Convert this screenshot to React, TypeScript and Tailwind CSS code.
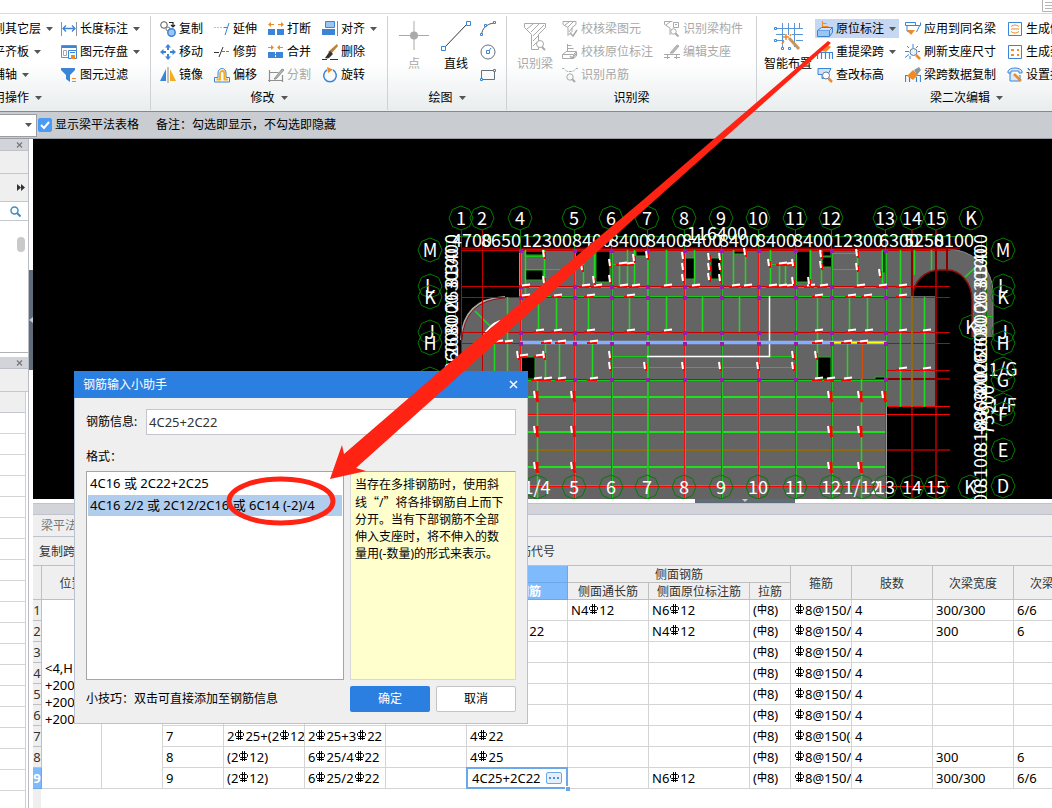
import React from 'react';

const FONT = "font-['Noto_Sans','Noto_Sans_CJK_SC',sans-serif]";

/* ---------- small pieces ---------- */

const Caret = ({ className = '' }: { className?: string }) => (
  <svg width="7" height="4" viewBox="0 0 7 4" className={`shrink-0 ${className}`}>
    <path d="M0 0h7L3.5 4z" fill="#555" />
  </svg>
);

const B = '#3b84d6';
const L = '#9cc6f2';
const O = '#f08a24';
const G = '#a9a9a9';

const ICONS: Record<string, React.ReactNode> = {
  length: (
    <g fill="none" stroke={B}>
      <path d="M.5 1v14M15.5 1v14" stroke="#8a929c" />
      <path d="M2 7.500h12M5 4.500L2 7.500l3 3M11 4.500l3 3-3 3" strokeWidth="1.300" />
    </g>
  ),
  store: (
    <g fill="none">
      <path d="M.5 1.500h15v12H.5z" stroke="#6d8fb3" fill="#fff" />
      <path d="M1 3h14" stroke={B} strokeWidth="2" />
      <path d="M2.500 6.500h3v5h-3z" stroke={G} />
      <path d="M7.500 6.500h8v8h-8z" stroke={B} fill="#fff" />
      <path d="M9 8.500h5" stroke={B} />
      <path d="M10 11h4v4h-4z" fill={O} />
    </g>
  ),
  filter: (
    <g>
      <path d="M0 1h14v2L9 8v7l-4-3V8L0 3z" fill={B} />
      <path d="M11 11.500h4M11 14.500h4" stroke={O} />
    </g>
  ),
  copy: (
    <g fill="none">
      <circle cx="4" cy="4" r="3.300" stroke="#555" />
      <circle cx="8" cy="8" r="2" stroke="#777" />
      <circle cx="11.500" cy="11.500" r="3.700" stroke={B} fill={L} strokeWidth="1.500" />
      <path d="M9 1.500h4v4M11 4l2 2 2-2" stroke="#222" strokeWidth="1.200" />
    </g>
  ),
  move: (
    <g fill={B}>
      <path d="M8 0l3 3.500H5zM8 16l3-3.500H5zM0 8l3.500-3v6zM16 8l-3.500-3v6z" />
      <path d="M8 3v3M8 10v3M3 8h3M10 8h3" stroke={B} strokeWidth="2" />
    </g>
  ),
  mirror: (
    <g>
      <path d="M6 2v12H0z" fill={B} />
      <path d="M10 2v12h6z" fill="#f5ac1d" />
      <path d="M8 0v16" stroke="#888" />
    </g>
  ),
  extend: (
    <g fill="none">
      <path d="M0 6.500h11" stroke={L} strokeDasharray="2 1" />
      <path d="M15 2l-4 12" stroke={B} />
      <path d="M10 6.500h3" stroke={B} />
    </g>
  ),
  trim: (
    <g fill="none">
      <path d="M0 8.500h5" stroke="#333" />
      <path d="M9 3L5 13" stroke="#333" />
      <path d="M8 7.500h8" stroke={B} strokeDasharray="3 1" />
    </g>
  ),
  offset: (
    <g fill="none">
      <path d="M.5 15V10.500h3.500V6a4 4.500 0 0 1 8 0v4.500h3.500V15z" stroke={B} />
      <path d="M2.500 12.500H6V6.500a2.200 2.500 0 0 1 4.400 0v6h3.500" stroke="#f5ac1d" strokeWidth="1.800" />
    </g>
  ),
  breakIt: (
    <g>
      <path d="M0 8h7v6H0zM9 8h7v6H9z" fill={B} />
      <path d="M0 3.500L3 1v5zM16 3.500L13 1v5z" fill={O} />
      <path d="M2 3.500h4M10 3.500h4" stroke={O} />
    </g>
  ),
  merge: (
    <g>
      <path d="M0 8h15v6H0z" fill={B} />
      <path d="M7.500 8v6" stroke="#fff" strokeDasharray="2 1" />
      <path d="M6 3.500L3 1v5zM9 3.500L12 1v5z" fill={O} />
      <path d="M0 3.500h4M11 3.500h4" stroke={O} />
    </g>
  ),
  split: (
    <g fill="none" stroke="#909090">
      <path d="M1.500 5.500h9M1.500 3v12M0 13.500h15M14.500 8v7" strokeWidth="1.200" />
      <path d="M6 12l8-10 2 1-8 9z" fill="#b4b4b4" />
    </g>
  ),
  align: (
    <g>
      <path d="M3.500.5h9v6h-9z" fill={L} stroke={B} />
      <path d="M0 8h13v6H0z" fill={B} />
      <path d="M15.500 0v15" stroke="#888" />
    </g>
  ),
  erase: (
    <g>
      <path d="M15 0l1 2-7 8-3-2z" fill="#b9803d" />
      <path d="M8 7l3 3-4 4c-2 1-4 0-4 0z" fill="#333" />
      <path d="M0 15.500h5M8 15.500h8" stroke="#333" />
    </g>
  ),
  rotate: (
    <g fill="none">
      <path d="M11 3a6.300 6.300 0 1 1-6 0" stroke={B} strokeWidth="1.500" />
      <path d="M5 0l6 2.500L6 6z" fill={O} />
    </g>
  ),
  arc: (
    <g fill="none">
      <path d="M1.500 14C2 8 6 3 14 2" stroke="#555" />
      <path d="M.5 12.500h2v2h-2zM4.500 3.500h2v2h-2zM13.500.5h2v2h-2z" fill="#fff" stroke={B} />
    </g>
  ),
  circle: (
    <g fill="none">
      <circle cx="8" cy="8" r="7" stroke="#66707a" />
      <path d="M8 8l3-4" stroke={B} />
      <path d="M6.500 6.500h3v3h-3z" fill="#fff" stroke={B} />
    </g>
  ),
  rect: (
    <g fill="none">
      <path d="M1.500 3.500h13v9h-13z" stroke="#66707a" />
      <path d="M13.500 2.500h2v2h-2zM.5 11.500h2v2h-2z" fill="#fff" stroke={B} />
    </g>
  ),
  checkBeam: (
    <g fill="none" stroke={G}>
      <path d="M1 .5h13v3l-4 3v4l-4 4v-8l-5-3z" />
      <path d="M3 4l4-3M6 6l5-5M7 11l3-4" />
      <path d="M8 12l3 3 4-6" strokeWidth="1.500" />
    </g>
  ),
  checkNote: (
    <g fill="none" stroke={G}>
      <path d="M5.500 0v7M5.500 1.500h4M5.500 4.500h6" />
      <path d="M.5 10.500l4-3h10l-3 3zM.5 10.500v4h11v-4M14.500 8v4l-3 2.500" />
      <path d="M8 12l2 2 5-5" strokeWidth="1.500" />
    </g>
  ),
  hanger: (
    <g fill="none" stroke={G}>
      <path d="M0 1.500h2l3 3h6l3-3h2" strokeDasharray="3 1" />
      <circle cx="8" cy="10" r="3.200" />
      <path d="M10 12l3 3" strokeWidth="2" />
    </g>
  ),
  beamPart: (
    <g fill="none" stroke={G}>
      <path d="M6 14V7L.5 3.500v-3h8M2 4l4-3" />
      <path d="M9.500 1.500h5v5h-5zM11 3.500h2" />
      <circle cx="9.500" cy="10.500" r="2.700" />
      <path d="M11.500 12.500l3 3" strokeWidth="2" />
    </g>
  ),
  support: (
    <g fill="none" stroke={G}>
      <path d="M0 10.500h16M3.500 11v4M12.500 11v4M0 13.500h6M10 13.500h6" />
      <path d="M6 9l7-8 2 1-6 7z" fill="#bbb" />
    </g>
  ),
  note: (
    <g fill="none">
      <path d="M5.500 0v8M5.500 2.500h4M5.500 5.500h6" stroke={O} />
      <path d="M.5 9.500l4-3h11l-3 3z" fill="#cfe2f7" stroke={B} />
      <path d="M.5 9.500v6h12v-6M15.500 6.500v5l-3 4" fill={L} stroke={B} />
    </g>
  ),
  span: (
    <g fill="none">
      <path d="M.5 15V8.500h15V15M4.500 9v6M8.500 9v6M12.500 9v6" stroke={B} strokeWidth="1.200" />
      <path d="M5 7l6-6 3 2-5 5z" fill={O} />
    </g>
  ),
  level: (
    <g fill="none">
      <path d="M1 1.500h13l-3 6v4H5v-4H1z" fill="#cfe2f7" stroke={B} />
      <circle cx="9" cy="8.500" r="3.500" fill="#fff" stroke="#607d9e" />
      <path d="M11.500 11.500l3.500 3.500" stroke={O} strokeWidth="2.500" />
    </g>
  ),
  apply: (
    <g fill="none">
      <path d="M.5 1.500h10v3H.5zM5.500 4.500h10v-3M2 5v5l4 2M14.500 5l-3 6" stroke={B} />
      <path d="M2 9h8l-4 5z" fill={O} />
    </g>
  ),
  refresh: (
    <g fill="none">
      <path d="M0 7.500h4M8 0v4M2 2l2 2M13 2l-2 2M0 13.500l4-3M5 15v-3M15 7.500h-2" stroke={B} />
      <circle cx="8.500" cy="8" r="3.500" fill="#e8f1fb" stroke="#607d9e" />
      <path d="M11 11l4 4" stroke={O} strokeWidth="2.500" />
    </g>
  ),
  brush: (
    <g fill="none">
      <path d="M.5 15V8.500h15V15M4.500 10v5M11.500 10v5" stroke={B} strokeWidth="1.200" />
      <path d="M2 9l6-6 5 5-5 5z" fill={O} />
      <path d="M9 3l5-3 2 3-4 5z" fill="#8b95a1" />
    </g>
  ),
  gen1: (
    <g fill="none">
      <path d="M1.500 1.500h13v13h-13z" stroke={B} />
      <path d="M4 5.500c3-2 5-2 8 0M4 8h8M4 10.500c3 2 5 2 8 0" stroke={O} />
    </g>
  ),
  gen2: (
    <g fill="none">
      <path d="M1.500 1.500h13v13h-13z" stroke={B} />
      <path d="M4 5h3v2H4zM10 5h2v2h-2zM4 10h3v2H4zM10 10h2v2h-2z" fill={O} />
    </g>
  ),
  gen3: (
    <g fill="none">
      <path d="M1 4c2-4 12-4 14 0v2h-3V4H4v2H1zM3 6v8h10V8" stroke={B} fill="#dbe9f8" />
      <path d="M7 7l7 7" stroke={O} strokeWidth="2.500" />
    </g>
  ),
};

const Icon = ({ name }: { name: string }) => (
  <svg width="16" height="16" viewBox="0 0 16 16" className="shrink-0">
    {ICONS[name]}
  </svg>
);

interface ToolProps {
  icon?: string;
  label: string;
  caret?: boolean;
  off?: boolean;
  active?: boolean;
}

const Tool = ({ icon, label, caret, off, active }: ToolProps) => (
  <button
    type="button"
    disabled={off}
    className={`flex h-[19px] items-center gap-[3px] pl-[2px] whitespace-nowrap ${off ? 'text-[#a8a8a8]' : 'text-black'} ${active ? 'bg-[#c5d7f2]' : ''}`}
  >
    {icon && <Icon name={icon} />}
    <span>{label}</span>
    {caret && <Caret className="mr-[3px] ml-[2px]" />}
  </button>
);

const Column = ({ items, className = '' }: { items: ToolProps[]; className?: string }) => (
  <div className={`flex shrink-0 flex-col items-start gap-1 ${className}`}>
    {items.map((t) => (
      <Tool key={t.label} {...t} />
    ))}
  </div>
);

const BigTool = ({ label, off, children }: { label: string; off?: boolean; children: React.ReactNode }) => (
  <button
    type="button"
    disabled={off}
    className={`flex shrink-0 flex-col items-center whitespace-nowrap ${off ? 'text-[#a8a8a8]' : 'text-black'}`}
  >
    <svg width="32" height="34" viewBox="0 0 32 34">{children}</svg>
    <span className="leading-[22px]">{label}</span>
  </button>
);

interface GroupProps {
  title: string;
  caret?: boolean;
  width: string;
  children: React.ReactNode;
}

const Group = ({ title, caret, width, children }: GroupProps) => (
  <section className={`flex h-[94px] shrink-0 flex-col border-r border-[#cfd2d4] ${width}`}>
    <div className="flex h-[70px] pt-[3px]">{children}</div>
    <div className="flex h-6 items-center justify-center gap-[6px]">
      <span>{title}</span>
      {caret && <Caret />}
    </div>
  </section>
);

/* ---------- ribbon ---------- */

const Ribbon = () => (
  <header className="shrink-0 bg-white">
    <div className="flex h-[14px] justify-end border-b border-[#d9d9d9]">
      <svg width="10" height="12" viewBox="0 0 10 12">
        <path d="M.5 0v11.500H10M3 2.500h7M3 5.500h7M3 8.500h7" stroke="#b5b5b5" fill="none" />
      </svg>
    </div>
    <div className="flex h-[98px] overflow-hidden border-b border-[#85888c] bg-linear-to-b from-white from-50% to-[#e9edee] pt-[2px]">
      <section className="flex h-[94px] w-[151px] shrink-0 flex-col border-r border-[#cfd2d4]">
        <div className="flex h-[70px] pt-[3px]">
          <Column
            className="-ml-[33px] w-[92px]"
            items={[
              { label: '复制到其它层', caret: true },
              { label: '自动平齐板', caret: true },
              { label: '两点辅轴', caret: true },
            ]}
          />
          <Column
            items={[
              { icon: 'length', label: '长度标注', caret: true },
              { icon: 'store', label: '图元存盘', caret: true },
              { icon: 'filter', label: '图元过滤' },
            ]}
          />
        </div>
        <div className="-ml-[19px] flex h-6 items-center gap-[6px]">
          <span>通用操作</span>
          <Caret />
        </div>
      </section>

      <Group title="修改" caret width="w-[237px]">
        <Column
          className="ml-[7px] w-[54px]"
          items={[
            { icon: 'copy', label: '复制' },
            { icon: 'move', label: '移动' },
            { icon: 'mirror', label: '镜像' },
          ]}
        />
        <Column
          className="w-[54px]"
          items={[
            { icon: 'extend', label: '延伸' },
            { icon: 'trim', label: '修剪' },
            { icon: 'offset', label: '偏移' },
          ]}
        />
        <Column
          className="w-[54px]"
          items={[
            { icon: 'breakIt', label: '打断' },
            { icon: 'merge', label: '合并' },
            { icon: 'split', label: '分割', off: true },
          ]}
        />
        <Column
          items={[
            { icon: 'align', label: '对齐', caret: true },
            { icon: 'erase', label: '删除' },
            { icon: 'rotate', label: '旋转' },
          ]}
        />
      </Group>

      <Group title="绘图" caret width="w-[119px]">
        <div className="flex gap-[10px] pl-[10px]">
          <BigTool label="点" off>
            <path d="M16 2v29M1 16.500h30" stroke="#aaa" />
            <circle cx="16" cy="16.500" r="4" fill="#aaa" />
          </BigTool>
          <BigTool label="直线">
            <path d="M4 29L28 4" stroke="#333" />
            <path d="M1.500 27.500h4v4h-4zM26.500 2.500h4v4h-4z" fill="#fff" stroke={B} />
          </BigTool>
          <div className="-ml-[2px] flex flex-col gap-[7px] pt-[2px]">
            {['arc', 'circle', 'rect'].map((n) => (
              <button key={n} type="button" aria-label={n} className="block h-4">
                <Icon name={n} />
              </button>
            ))}
          </div>
        </div>
      </Group>

      <Group title="识别梁" width="w-[250px]">
        <div className="flex w-[53px] justify-center pl-[3px]">
          <BigTool label="识别梁" off>
            <g fill="none" stroke={G}>
              <path d="M5.500 4.500h21v4l-7 7v15h-7v-15l-7-7z" />
              <path d="M8 10l6-5M12 13l8-8M14 17l11-11M14 22l5-5M14 27l4-4" />
              <circle cx="21" cy="25" r="3.500" fill="#fff" />
              <path d="M23 28l3 3" strokeWidth="2" />
            </g>
          </BigTool>
        </div>
        <Column
          className="w-[102px]"
          items={[
            { icon: 'checkBeam', label: '校核梁图元', off: true },
            { icon: 'checkNote', label: '校核原位标注', off: true },
            { icon: 'hanger', label: '识别吊筋', off: true },
          ]}
        />
        <Column
          items={[
            { icon: 'beamPart', label: '识别梁构件', off: true },
            { icon: 'support', label: '编辑支座', off: true },
          ]}
        />
      </Group>

      <Group title="梁二次编辑" caret width="w-[420px]">
        <div className="flex w-[58px] justify-center pl-[4px]">
          <BigTool label="智能布置">
            <g fill="none">
              <path d="M10.500 4v24M16.500 4v12M22.500 4v24M27.500 4v6M4 9.500h27M4 15.500h9M20 15.500h11M4 21.500h8M24 21.500h7" stroke="#5b94d6" />
              <path d="M2.500 8.500h2v2h-2zM2.500 20.500h2v2h-2zM9.500 28.500h2v2h-2zM16.500 28.500h2v2h-2z" fill="#fff" stroke={B} />
              <path d="M17 19l10 11" stroke="#c9955a" strokeWidth="3" />
              <path d="M14 15v6M11 18h6M12 22l-2 3M19 15l-1 2" stroke={O} strokeWidth="1.500" />
            </g>
          </BigTool>
        </div>
        <Column
          className="w-[88px]"
          items={[
            { icon: 'note', label: '原位标注', caret: true, active: true },
            { icon: 'span', label: '重提梁跨', caret: true },
            { icon: 'level', label: '查改标高' },
          ]}
        />
        <Column
          className="w-[102px]"
          items={[
            { icon: 'apply', label: '应用到同名梁' },
            { icon: 'refresh', label: '刷新支座尺寸' },
            { icon: 'brush', label: '梁跨数据复制' },
          ]}
        />
        <Column
          items={[
            { icon: 'gen1', label: '生成侧面筋' },
            { icon: 'gen2', label: '生成架立筋' },
            { icon: 'gen3', label: '设置拱梁' },
          ]}
        />
      </Group>
    </div>
  </header>
);

/* ---------- side panels ---------- */

const PanelHead = () => (
  <div className="flex h-3 shrink-0 items-center justify-end border-b border-[#bfc1c8] bg-[#d3d4da] pr-[5px]">
    <button type="button" aria-label="关闭" className="block">
      <svg width="7" height="6" viewBox="0 0 7 6">
        <path d="M1 .5l5 5M6 .5l-5 5" stroke="#777" strokeWidth="1.200" />
      </svg>
    </button>
  </div>
);

const SidePanels = () => (
  <aside className="flex w-[29px] shrink-0 flex-col border-r border-[#b9bcc4]">
    <PanelHead />
    <div className="h-[23px] shrink-0 border-b border-[#c4c7ce] bg-[#efefef]" />
    <div className="flex h-7 shrink-0 items-center justify-end border-b border-[#c4c7ce] bg-[#efefef] pr-[3px]">
      <svg width="8" height="7" viewBox="0 0 8 7">
        <path d="M0 0l4 3.500L0 7zM4 0l4 3.500L4 7z" fill="#333" />
      </svg>
    </div>
    <div className="flex h-[19px] shrink-0 items-center justify-end border-b border-[#c4c7ce] pr-[7px]">
      <svg width="11" height="11" viewBox="0 0 11 11" fill="none" stroke="#3a8fc7">
        <circle cx="4.500" cy="4.500" r="3.500" strokeWidth="1.500" />
        <path d="M7 7l3.500 3.500" strokeWidth="2" />
      </svg>
    </div>
    <div className="flex h-[132px] shrink-0 justify-end border-b border-[#b0b3b8] pt-4 pr-[3px]">
      <div className="h-[15px] w-2 rounded-full bg-[#c9c9c9]" />
    </div>
    <div className="h-1 shrink-0" />
    <PanelHead />
    <div className="h-[23px] shrink-0 border-b border-[#c4c7ce] bg-[#efefef]" />
    <div className="mr-[2px] border-r border-[#cfcfcf]">
      <div className="h-[21px] border-b border-[#c4c7ce] bg-[#efefef]" />
      {Array.from({ length: 19 }, (_, i) => (
        <div key={i} className="h-[21px] border-b border-[#d4d4d4]" />
      ))}
    </div>
  </aside>
);

/* ---------- drawing ---------- */

const COLS: [number, string][] = [
  [461, '1'], [482, '2'], [520, '4'], [574, '5'], [611, '6'], [647, '7'], [684, '8'], [721, '9'],
  [758, '10'], [795, '11'], [831, '12'], [885, '13'], [912, '14'], [936, '15'], [971, 'K'],
];
const BOTTOM: [number, string][] = [
  [537, '1/4'], [574, '5'], [611, '6'], [647, '7'], [684, '8'], [721, '9'], [758, '10'], [795, '11'],
  [831, '12'], [862, '1/12'], [885, '13'], [912, '14'], [936, '15'], [970, 'K'],
];
const LEFT_ROWS: [number, string][] = [[250, 'M'], [286, 'L'], [297, 'K'], [332, 'J'], [343, 'H'], [379, 'G']];
const RIGHT_ROWS: [number, string][] = [
  [250, 'M'], [286, 'L'], [297, 'K'], [332, 'J'], [343, 'H'], [369, '1/G'], [380, 'G'],
  [405, '1/F'], [414, 'F'], [450, 'E'], [486, 'D'],
];
const TOP_DIMS: [number, string][] = [
  [472, '4700'], [501, '8650'], [547, '12300'], [592, '8400'], [629, '8400'], [666, '8400'], [702, '8400'],
  [739, '8400'], [776, '8400'], [813, '8400'], [858, '12300'], [899, '6300'], [924, '5250'], [954, '8100'],
];
const LEFT_DIMS: [number, string][] = [
  [254, '3400'], [268, '8100'], [291, '2630'], [314, '8000'], [337, '2630'], [357, '12600'],
];
const RIGHT_DIMS: [number, string][] = [
  [254, '3400'], [268, '8100'], [291, '2630'], [314, '8000'], [337, '2630'], [357, '12600'], [374, '2000'],
  [392, '6300'], [410, '8300'], [432, '8100'], [468, '8100'], [504, '8100'],
];
const VOIDS = [
  [525, 251, 18, 4], [525, 270, 18, 10], [575, 251, 14, 9], [596, 251, 14, 31], [636, 251, 11, 5],
  [685, 258, 10, 21], [711, 258, 10, 21], [734, 251, 11, 3], [796, 251, 14, 31], [822, 251, 9, 5],
  [822, 257, 10, 10], [882, 251, 3, 22], [817, 357, 14, 22], [521, 357, 14, 22], [875, 377, 10, 3],
];
const GREEN_V = [
  [525, 250, 297], [544, 250, 286], [583, 262, 286], [594, 250, 286], [619, 264, 286], [627, 250, 286], [634, 250, 286],
  [666, 250, 286], [694, 250, 286], [733, 250, 286], [745, 250, 286], [770, 250, 286], [779, 264, 286], [785, 264, 286],
  [810, 250, 286], [821, 250, 286], [857, 250, 286], [882, 250, 286], [900, 250, 407], [914, 250, 275], [931, 250, 270],
  [507, 297, 379], [538, 297, 332], [556, 297, 332], [588, 297, 332], [629, 297, 332], [666, 297, 332], [702, 297, 332],
  [739, 297, 332], [817, 297, 343], [849, 297, 332], [867, 297, 332], [924, 297, 407], [494, 343, 379], [545, 343, 379],
  [559, 343, 379], [592, 343, 379], [817, 343, 379], [847, 343, 379], [537, 379, 499], [861, 379, 499],
];
const H_TICKS: [number, number[]][] = [
  [286, [525, 585, 597, 623, 635, 667, 695, 735, 747, 772, 782, 790, 810, 823, 860, 882, 902]],
  [296, [525, 557, 590, 630, 818, 851, 867, 902]],
  [331, [539, 557, 590, 630, 667, 818, 851, 868, 902, 926]],
  [342, [498, 508, 547, 561, 593, 818, 847, 863]],
  [369, [902, 926]],
  [379, [537, 547, 561, 593, 818, 830, 847]],
  [356, [523, 539]],
  [264, [622, 630, 782, 790]],
];
const V_TICKS: [number, number[]][] = [
  [544, [254, 280, 355]], [582, [267]], [594, [280]], [610, [263, 279, 355, 366]], [634, [258]], [647, [255]],
  [683, [256, 267, 278, 366]], [709, [257, 267, 277]], [720, [257, 267, 278, 366]], [745, [252]], [769, [263]],
  [793, [263, 281, 355, 366]], [809, [281]], [821, [254, 265]], [857, [253, 267]], [880, [273]], [518, [355]],
  [645, [366]], [758, [366]], [816, [355]],
];
const BIG_TICKS: [number, number][] = [
  [537, 396], [537, 431], [537, 467], [574, 396], [574, 431], [574, 467],
  [831, 396], [831, 431], [831, 467], [861, 396], [861, 431], [861, 467], [885, 396],
];
const GRID_X = [520, 574, 611, 647, 684, 721, 758, 795, 831, 885];
const GRID_Y = [250, 286, 297, 332, 343, 379];

const octagon = (cx: number, cy: number) =>
  Array.from({ length: 8 }, (_, i) => {
    const a = (i * Math.PI) / 4;
    return `${(cx + 12 * Math.cos(a)).toFixed(1)},${(cy + 12 * Math.sin(a)).toFixed(1)}`;
  }).join(' ');

const Mark = ({ x, y, label }: { x: number; y: number; label: string }) => (
  <g>
    <polygon points={octagon(x, y)} fill="none" stroke="#007d00" />
    <text x={x} y={y + 7} fill="#fff" textAnchor="middle">{label}</text>
  </g>
);

const Drawing = () => (
  <svg
    viewBox="33 139 1019 360"
    preserveAspectRatio="xMinYMin slice"
    className="block h-[360px] w-full shrink-0 bg-black font-['Noto_Sans_CJK_SC',sans-serif] text-[18px]"
  >
    <path d="M461 499V340Q463 299 505 297H520V249H947A46 43 0 0 1 993 292V337H972V300A25 30 0 0 0 947 270H940A27 26 0 0 0 913 296H936V407H886V499z" fill="#646464" />
    <g fill="none">
      <path d="M461 340Q463 299 505 297" stroke="#a9a9a9" strokeWidth="2" />
      <path d="M462 340Q464 300 505 298" stroke="#8a1010" />
      <path d="M947 249A46 43 0 0 1 993 292V337" stroke="#8a8a8a" />
      <path d="M913 296A27 26 0 0 1 940 270H947A25 30 0 0 1 972 300V337" stroke="#8a1010" strokeWidth="1.500" />
      <path d="M483 337Q489 325 500 321" stroke="#fff" strokeWidth="2" />
      <path d="M475 311l15 15M965 277l12-11" stroke="#1fd81f" strokeWidth="1.500" />
    </g>
    {VOIDS.map(([x, y, w, h]) => (
      <rect key={`${x}-${y}`} x={x} y={y} width={w} height={h} fill="#000" stroke="#1fae1f" />
    ))}

    {/* grid */}
    <g fill="none">
      <path d="M461.500 230V379M482.500 230V499" stroke="#c00000" />
      <path d="M912 230V296M936 230V499M912 407V499" stroke="#8f0000" strokeWidth="2" />
      <path d="M461 250.500H950M461 286.500H950M461 297.500H950M461 332.500H950M461 343.500H950M886 370.500H950M520 379.500H950" stroke="#c80000" />
      <path d="M886 406.500H950M520 414.500H950M520 486.500H950" stroke="#ff0000" />
      <path d="M461 248.500H960M886 379H950M886 450H950M947 249V270" stroke="#8a0000" strokeWidth="2" />
      <path d="M520 450H886M574 379V499M758 379V499M912 296V407" stroke="#8f6a12" strokeWidth="2" />
      <path d="M520 397H886M520 432H886M520 467H886" stroke="#1fe01f" strokeWidth="2" />
      <path d="M520 287.500H886M520 296.500H886M520 380.500H886M520 415.500H886M520 485.500H886M611 356.500H647M611 367.500H795M770 356.500H795M525 256.500H543M525 269.500H560M611 264.500H634M770 264.500H793M831 253.500H857M831 269.500H857M973 316.500H993" stroke="#18c818" />
      {GREEN_V.map(([x, a, b]) => (
        <path key={`${x}-${a}`} d={`M${x + 0.5} ${a}V${b}`} stroke="#1fd81f" strokeWidth="1.500" />
      ))}
      {GRID_X.map((x) => (
        <g key={x}>
          <path d={`M${x + 1.5} 250V499`} stroke="#22c022" />
          <path d={`M${x + 0.5} 250V499`} stroke={x === 647 ? '#18d018' : '#f01010'} />
          <path d={`M${x + 0.5} 230V250`} stroke="#007d00" />
        </g>
      ))}
      <path d="M862.500 343V379" stroke="#d4500a" />
      <path d="M519.500 250V297M886.500 407V499" stroke="#999" />
      <path d="M647 356.500H769.500V296" stroke="#fff" strokeWidth="1.500" />
      <path d="M520 342.500H886" stroke="#86adff" strokeWidth="3.500" />
      <path d="M831 342.500H886" stroke="#ffff00" strokeWidth="1.500" />
    </g>

    {/* column nodes */}
    <g fill="#9a1ab0">
      {GRID_X.map((x) =>
        GRID_Y.map((y) => <rect key={`${x}-${y}`} x={x - 1} y={y - 1} width="4" height="4" />),
      )}
    </g>

    {/* rebar notes */}
    {H_TICKS.map(([y, xs]) =>
      xs.map((x) => (
        <g key={`${x}-${y}`}>
          <path d={`M${x - 6} ${y + 1}h10`} stroke="#f00" strokeWidth="2" />
          <path d={`M${x - 3} ${y - 0.5}l8-1`} stroke="#fff" strokeWidth="2" />
        </g>
      )),
    )}
    {V_TICKS.map(([x, ys]) =>
      ys.map((y) => (
        <g key={`${x}-${y}`}>
          <path d={`M${x + 1} ${y - 2}v7`} stroke="#f00" strokeWidth="2" />
          <path d={`M${x - 1} ${y - 4}l1 7`} stroke="#fff" strokeWidth="2" />
        </g>
      )),
    )}
    {BIG_TICKS.map(([x, y]) => (
      <g key={`${x}-${y}`}>
        <path d={`M${x} ${y - 5}v8l1 3`} stroke="#f00" strokeWidth="3" fill="none" />
        <path d={`M${x - 3} ${y - 5}l1 7`} stroke="#fff" strokeWidth="2" />
      </g>
    ))}

    {/* axes and dimensions */}
    <path d="M450 236.500H975M446.500 236V372M455.500 236V372M981.500 236V499M986.500 236V499" stroke="#067806" />
    {COLS.map(([x, t]) => <Mark key={x} x={x} y={218} label={t} />)}
    {BOTTOM.map(([x, t]) => <Mark key={x} x={x} y={487} label={t} />)}
    {LEFT_ROWS.map(([y, t]) => <Mark key={y} x={430} y={y} label={t} />)}
    {RIGHT_ROWS.map(([y, t]) => <Mark key={y} x={1003} y={y} label={t} />)}
    <Mark x={971} y={327} label="K" />
    <g fill="#fff" textAnchor="middle">
      <text x="717" y="240">116400</text>
      {TOP_DIMS.map(([x, t]) => <text key={x} x={x} y="247">{t}</text>)}
      {LEFT_DIMS.map(([y, t]) => <text key={y} transform={`translate(458 ${y}) rotate(-90)`}>{t}</text>)}
      {RIGHT_DIMS.map(([y, t]) => <text key={y} transform={`translate(987 ${y}) rotate(-90)`}>{t}</text>)}
      <text transform="translate(994 410) rotate(-90)">75900</text>
    </g>
  </svg>
);

/* ---------- beam table ---------- */

const Rebar = () => (
  <svg width="9" height="11" viewBox="0 0 9 11" className="mx-px inline-block align-baseline" fill="none" stroke="#000">
    <path d="M1.500 2.500h6l1 1v2l-1 1h-6l-1-1v-2zM3.500 0v10M5.500 0v10M1 8.500h7" />
  </svg>
);

/* "C" before a diameter is drawn as the HRB400 sign, "A" as the plain bar sign */
const Spec = ({ text }: { text: string }) => (
  <>
    {text.split(/([CA])/).map((part, i) => {
      if (part === 'C') return <Rebar key={i} />;
      if (part === 'A') return <span key={i} className="align-[2px] text-[10px] leading-none font-medium">中</span>;
      return part;
    })}
  </>
);

const WIDTHS = [9, 60, 61, 61, 81, 81, 81, 101, 81, 101, 41, 61, 81, 81, 81];

const ROWS = [
  ['', '', '', '', 'N4C12', 'N6C12', '(A8)', 'C8@150/', '4', '300/300', '6/6'],
  ['', '', '', '2C25+3C22', '', 'N4C12', '(A8)', 'C8@150/', '4', '300', '6'],
  ['', '', '', '', '', '', '(A8)', 'C8@150/', '4', '', ''],
  ['', '', '', '', '', '', '(A8)', 'C8@150/', '4', '', ''],
  ['', '', '', '', '', '', '(A8)', 'C8@150/', '4', '', ''],
  ['', '', '', '', '', '', '(A8)', 'C8@150/', '4', '', ''],
  ['2C25+(2C12', '2C25+3C22', '', '4C22', '', '', '(A8)', 'C8@150(4', '4', '', ''],
  ['(2C12)', '6C25/4C22', '', '4C25', '', '', '(A8)', 'C8@150/', '4', '300', '6'],
  ['(2C12)', '6C25/2C22', '', 'edit', '', 'N6C12', '(A8)', 'C8@150/', '4', '300/300', '6/6'],
];

const TH = 'border-r border-b border-[#bfbfbf] p-0 pt-px text-center align-middle font-normal overflow-hidden whitespace-nowrap text-[#333]';
const TD = 'h-[21px] border-r border-b border-[#d4d4d4] p-0 pl-[3px] leading-[19px] overflow-hidden whitespace-nowrap';

const EditCell = () => (
  <td className="relative h-[21px] p-0 leading-none">
    <div className="absolute -top-px right-0 bottom-0 -left-px flex items-center border-2 border-[#6aa8e8] bg-white">
      <input aria-label="下部钢筋" defaultValue="4C25+2C22" className="w-[78px] min-w-0 pl-[4px] outline-none" />
      <button type="button" aria-label="更多" className="flex h-3 w-4 items-center justify-center gap-[2px] rounded-xs border border-[#6aa8e8] bg-[#e4effb]">
        <i className="size-[2px] bg-[#4a8fd8]" />
        <i className="size-[2px] bg-[#4a8fd8]" />
        <i className="size-[2px] bg-[#4a8fd8]" />
      </button>
      <i className="absolute -right-[4px] -bottom-[4px] size-[5px] border-t border-l border-white bg-[#6aa8e8]" />
    </div>
  </td>
);

const BeamTable = () => (
  <table className="w-[1062px] table-fixed border-separate border-spacing-0 border-t border-[#bfbfbf]">
    <colgroup>
      {WIDTHS.map((w, i) => (
        <col key={i} style={{ width: w }} />
      ))}
    </colgroup>
    <thead className="bg-[#efefef]">
      <tr className="h-[17px] leading-[15px]">
        <th rowSpan={2} className={TH} aria-label="行号" />
        <th rowSpan={2} className={TH}>位置</th>
        <th rowSpan={2} className={TH}>名称</th>
        <th rowSpan={2} className={TH}>跨号</th>
        <th colSpan={3} className={TH}>上部钢筋</th>
        <th className="border-r border-b border-[#6aa8e8] bg-[#7fbbfc] p-0" aria-label="下部" />
        <th colSpan={3} className={TH}>侧面钢筋</th>
        <th rowSpan={2} className={TH}>箍筋</th>
        <th rowSpan={2} className={TH}>肢数</th>
        <th rowSpan={2} className={TH}>次梁宽度</th>
        <th rowSpan={2} className={TH}>次梁加筋</th>
      </tr>
      <tr className="h-[17px] leading-[15px]">
        <th className={TH}>上通长筋</th>
        <th className={TH}>左支座</th>
        <th className={TH}>右支座</th>
        <th className="overflow-hidden border-r border-b border-[#6aa8e8] bg-[#7fbbfc] p-0 pt-px text-center font-bold whitespace-nowrap text-white">下部钢筋</th>
        <th className={TH}>侧面通长筋</th>
        <th className={TH}>侧面原位标注筋</th>
        <th className={TH}>拉筋</th>
      </tr>
    </thead>
    <tbody className="text-[13px]">
      {ROWS.map((row, r) => (
        <tr key={r}>
          <th
            className={`h-[21px] border-r border-b p-0 leading-5 ${r === 8 ? 'border-[#6aa8e8] bg-[#7fbbfc] font-bold text-white' : 'border-[#bfbfbf] bg-[#efefef] font-normal text-[#333]'}`}
          >
            {r + 1}
          </th>
          {r === 0 && (
            <>
              <td rowSpan={9} className="border-r border-b border-[#d4d4d4] p-0 pl-[3px] leading-[17px]">
                &lt;4,H
                <br />
                +200
                <br />
                +200
                <br />
                +200
              </td>
              <td rowSpan={9} className="border-r border-b border-[#d4d4d4] p-0" />
            </>
          )}
          <td className={TD}>{r + 1}</td>
          {row.map((c, i) =>
            c === 'edit' ? (
              <EditCell key={i} />
            ) : (
              <td key={i} className={TD}>
                <Spec text={c} />
              </td>
            ),
          )}
        </tr>
      ))}
    </tbody>
  </table>
);

/* ---------- dialog ---------- */

const Dialog = () => (
  <div
    role="dialog"
    aria-labelledby="helper-title"
    className="absolute top-[371px] left-[74px] flex w-[454px] flex-col border border-[#b8c2d0] bg-[#efefef]"
  >
    <div className="-mx-px -mt-px flex h-[27px] items-center justify-between bg-[#2b7fe1] pr-[10px] pl-[9px] text-white">
      <h2 id="helper-title">钢筋输入小助手</h2>
      <button type="button" aria-label="关闭">
        <svg width="9" height="9" viewBox="0 0 9 9">
          <path d="M1 1l7 7M8 1l-7 7" stroke="#fff" strokeWidth="1.500" />
        </svg>
      </button>
    </div>
    <div className="px-[11px] pt-[11px] pb-[11px]">
      <div className="flex items-center justify-between">
        <label htmlFor="rebar">钢筋信息:</label>
        <input
          id="rebar"
          defaultValue="4C25+2C22"
          className="h-[26px] w-[370px] border border-[#c3c6cc] bg-white pl-[2px] text-[13px] text-[#333] outline-none"
        />
      </div>
      <div className="mt-3 leading-5">格式：</div>
      <div className="mt-1 flex justify-between">
        <ul className="h-[209px] w-[258px] border border-[#a5a5a5] bg-white p-px text-[13px]">
          <li className="h-[22px] pl-[2px] leading-[21px] whitespace-nowrap">4C16 或 2C22+2C25</li>
          <li className="h-[21px] bg-[#b0cdee] pl-[2px] leading-5 whitespace-nowrap">
            4C16 2/2 或 2C12/2C16 或 6C14 (-2)/4
          </li>
        </ul>
        <p className="h-[209px] w-[166px] border border-[#d8d8dc] border-t-[#a5a5a5] bg-[#ffffcd] pt-1 pl-1 leading-[17px] whitespace-nowrap">
          当存在多排钢筋时，使用斜
          <br />
          线<span className="font-['Noto_Sans_CJK_SC']">“</span>/<span className="font-['Noto_Sans_CJK_SC']">”</span>将各排钢筋自上而下
          <br />
          分开。当有下部钢筋不全部
          <br />
          伸入支座时，将不伸入的数
          <br />
          量用(-数量)的形式来表示。
        </p>
      </div>
      <div className="mt-[6px] flex items-center gap-[6px]">
        <span className="flex-1">小技巧：双击可直接添加至钢筋信息</span>
        <button type="button" className="h-[26px] w-20 rounded-xs bg-[#2b7fe1] text-white">确定</button>
        <button type="button" className="h-[26px] w-20 rounded-xs border border-[#c4c4c4] bg-white">取消</button>
      </div>
    </div>
  </div>
);

/* ---------- page ---------- */

export default function App() {
  return (
    <div className={`relative flex h-screen flex-col overflow-hidden bg-white text-[12px] leading-4 text-black ${FONT}`}>
      <Ribbon />

      <div className="flex h-[27px] shrink-0 items-center border-b border-[#9a9da3] bg-[#c9ccd1]">
        <button type="button" aria-label="楼层" className="flex h-[23px] w-[37px] items-center justify-end border border-l-0 border-[#9a9da3] bg-white pr-1">
          <Caret />
        </button>
        <label className="ml-px flex items-center gap-[3px]">
          <span className="relative flex">
            <input type="checkbox" defaultChecked className="peer m-0 size-[14px] appearance-none rounded-xs border border-[#4b9bf5] bg-white checked:bg-[#4b9bf5]" />
            <svg width="14" height="14" viewBox="0 0 14 14" className="pointer-events-none absolute top-0 left-0 hidden peer-checked:block">
              <path d="M3 7l3 3 5-6" fill="none" stroke="#fff" strokeWidth="2" />
            </svg>
          </span>
          显示梁平法表格
        </label>
        <span className="ml-[17px]">备注：勾选即显示，不勾选即隐藏</span>
      </div>

      <div className="flex min-h-0 flex-1">
        <SidePanels />
        <div className="w-1 shrink-0 pt-[131px]">
          <div className="flex h-[100px] items-center bg-[#606c78]">
            <svg width="4" height="6" viewBox="0 0 4 6">
              <path d="M4 0v6L0 3z" fill="#c5cad0" />
            </svg>
          </div>
        </div>

        <main className="flex min-w-0 flex-1 flex-col overflow-hidden">
          <Drawing />
          <div className="flex h-1 shrink-0 pl-[662px]">
            <div className="flex w-[100px] justify-center bg-[#606c78]">
              <svg width="6" height="4" viewBox="0 0 6 4">
                <path d="M0 0h6L3 3z" fill="#c5cad0" />
              </svg>
            </div>
          </div>
          <div className="h-3 shrink-0 border-y border-[#c0c3cb] bg-[#d3d4da]" />
          <div className="flex h-[22px] shrink-0 items-center border-b border-[#c0c3cb] bg-[#efefef] pl-2 text-[#777]">梁平法表格</div>
          <div className="flex h-7 shrink-0 items-center bg-[#efefef] pt-px pl-[6px] text-[#333]">
            <span className="w-[480px]">复制跨数据　粘贴跨数据　输入当前列数据　删除当前列数据</span>
            <span>筋代号</span>
          </div>
          <div className="flex min-h-0 flex-1 flex-col">
            <BeamTable />
            <div className="w-2 flex-1 bg-[#efefef]" />
          </div>
        </main>
      </div>

      <Dialog />

      {/* callout */}
      <svg className="pointer-events-none absolute top-0 left-0" width="1052" height="808" viewBox="0 0 1052 808">
        <path d="M828 41L643 200 447 365 344 454 342 445 330 479 366 471 356 468 471 365 655 200 831 43z" fill="#ff2314" />
        <ellipse cx="281" cy="501" rx="52" ry="22" fill="none" stroke="#ff2314" strokeWidth="5" />
      </svg>
    </div>
  );
}
